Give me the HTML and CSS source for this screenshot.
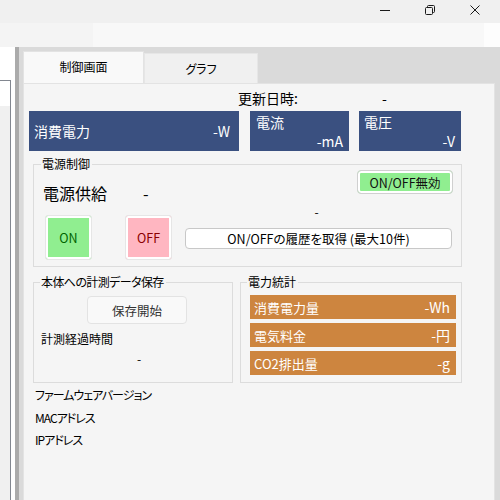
FILE: index.html
```html
<!DOCTYPE html>
<html lang="ja">
<head>
<meta charset="utf-8">
<title>制御画面</title>
<link rel="stylesheet" href="styles.css">
</head>
<body>
<div class="titlebar">
  <div class="cap-btn"><svg width="10" height="10" viewBox="0 0 10 10"><path d="M0 5.5H10" stroke="#1a1a1a" stroke-width="1" fill="none"/></svg></div>
  <div class="cap-btn"><svg width="10" height="10" viewBox="0 0 10 10"><rect x="0.5" y="2.5" width="7" height="7" rx="1" stroke="#1a1a1a" stroke-width="1" fill="none"/><path d="M2.5 2.5V1.5A1 1 0 0 1 3.5 0.5H8.5A1 1 0 0 1 9.5 1.5V6.5A1 1 0 0 1 8.5 7.5H7.5" stroke="#1a1a1a" stroke-width="1" fill="none"/></svg></div>
  <div class="cap-btn"><svg width="10" height="10" viewBox="0 0 10 10"><path d="M0.5 0.5L9.5 9.5M9.5 0.5L0.5 9.5" stroke="#1a1a1a" stroke-width="1" fill="none"/></svg></div>
</div>
<div class="toolbar"><div class="tb-a"></div><div class="tb-b"></div><div class="tb-c"></div></div>
<div class="main">
  <div class="leftpane"><div class="tree"><div class="tree-top"></div></div></div>
  <div class="splitter"></div>
  <div class="tabarea">
    <div class="tabs">
      <div class="tab active">制御画面</div>
      <div class="tab">グラフ</div>
    </div>
    <div class="panel">
      <div class="updated"><span class="upd-label">更新日時:</span><span>-</span></div>
      <div class="meters">
        <div class="meter m-power"><span>消費電力</span><span>-W</span></div>
        <div class="meter m-stack m-current"><span>電流</span><span class="mv">-mA</span></div>
        <div class="meter m-stack m-voltage"><span>電圧</span><span class="mv">-V</span></div>
      </div>
      <fieldset class="group g-power">
        <legend>電源制御</legend>
        <div class="pw-row1">
          <span class="supply-label">電源供給</span>
          <span class="supply-val">-</span>
          <button class="btn-disable"><span>ON/OFF無効</span></button>
        </div>
        <div class="pw-row2">
          <button class="btn-big btn-on">ON</button>
          <button class="btn-big btn-off">OFF</button>
          <div class="hist-col">
            <div class="hist-val">-</div>
            <button class="btn-hist">ON/OFFの履歴を取得 (最大10件)</button>
          </div>
        </div>
      </fieldset>
      <div class="lower">
        <fieldset class="group g-save">
          <legend>本体への計測データ保存</legend>
          <button class="btn-save">保存開始</button>
          <div class="elapsed-label">計測経過時間</div>
          <div class="elapsed-val">-</div>
        </fieldset>
        <fieldset class="group g-stats">
          <legend>電力統計</legend>
          <div class="stat"><span>消費電力量</span><span>-Wh</span></div>
          <div class="stat"><span>電気料金</span><span>-円</span></div>
          <div class="stat"><span>CO2排出量</span><span>-g</span></div>
        </fieldset>
      </div>
      <div class="info">
        <div class="info-line">ファームウェアバージョン</div>
        <div class="info-line">MACアドレス</div>
        <div class="info-line">IPアドレス</div>
      </div>
    </div>
  </div>
</div>
</body>
</html>
```

FILE: styles.css
```css
* { box-sizing: border-box; }
html, body { margin: 0; padding: 0; }
body {
  width: 500px;
  height: 500px;
  overflow: hidden;
  background: #f0f0f0;
  font-family: "Noto Sans CJK JP", "Noto Sans", sans-serif;
  font-feature-settings: "palt";
  font-size: 12px;
  color: #000;
}
button { font-family: inherit; font-feature-settings: "palt"; margin: 0; padding: 0; cursor: default; }

.titlebar {
  height: 23px;
  display: flex;
  justify-content: flex-end;
  align-items: flex-start;
  padding-right: 3px;
  background: #f0f0f0;
}
.cap-btn {
  width: 45px;
  height: 20px;
  display: flex;
  align-items: center;
  justify-content: center;
}
.cap-btn svg { display: block; }

.toolbar { height: 24px; display: flex; }
.tb-a { width: 93px; background: #f4f4f4; }
.tb-b { width: 391px; background: #f8f8f8; }
.tb-c { flex: 1; background: #fdfdfd; }

.main { height: 453px; display: flex; }
.leftpane { width: 15px; background: #fff; }
.tree {
  margin-top: 33px;
  width: 11px;
  height: 420px;
  border-top: 1px solid #828790;
  border-right: 1px solid #828790;
  background: #f0f0f0;
}
.tree-top { height: 25px; background: #fff; }
.splitter { width: 4px; background: #ababab; }

.tabarea {
  flex: 1;
  background: #dadada;
  display: flex;
  flex-direction: column;
}
.tabs {
  height: 36px;
  display: flex;
  align-items: flex-end;
  padding-left: 4px;
}
.tab {
  height: 30px;
  width: 114px;
  background: #f0f0f0;
  border: 1px solid #e6e6e6;
  border-bottom: none;
  display: flex;
  align-items: center;
  justify-content: center;
  font-size: 12px;
}
.tab.active {
  height: 32px;
  width: 121px;
  background: #f9f9f9;
  border-color: #e3e3e3;
  padding-bottom: 2px;
}

.panel {
  flex: 1;
  margin: 0 5px 0 4px;
  background: #f5f5f5;
  border: 1px solid #e3e3e3;
  border-bottom: none;
}

.updated {
  height: 27px;
  display: flex;
  align-items: center;
  padding-left: 214px;
  font-size: 14px;
}
.upd-label { width: 144px; }

.meters {
  height: 40px;
  display: flex;
  margin-left: 5px;
  gap: 11px;
}
.meter {
  background: #3a5080;
  color: #fff;
  font-size: 14px;
  display: flex;
}
.m-power {
  width: 210px;
  align-items: center;
  justify-content: space-between;
  padding: 0 9px 0 5px;
}
.m-stack {
  flex-direction: column;
  justify-content: space-between;
  padding: 2px 6px 1px 6px;
  line-height: 18px;
}
.m-stack .mv { align-self: flex-end; }
.m-current { width: 99px; }
.m-voltage { width: 102px; margin-left: -1px; padding-left: 5px; }

.group {
  margin: 0;
  padding: 0;
  border: 1px solid #dcdcdc;
  min-width: 0;
}
.group legend {
  font-size: 12px;
  line-height: 14px;
  padding: 0 2px 0 1px;
  margin-left: 6px;
}

.g-power {
  margin: 6px 0 0 9px;
  width: 429px;
  padding-bottom: 6px;
}
.g-power legend { margin-left: 7px; }
.pw-row1 {
  height: 33px;
  display: flex;
  align-items: flex-start;
}
.supply-label {
  margin: 12px 0 0 9px;
  font-size: 16px;
  line-height: 20px;
}
.supply-val {
  margin: 12px 0 0 36px;
  font-size: 16px;
  line-height: 20px;
}
.btn-disable {
  margin: -1px 8px 0 auto;
  width: 96px;
  height: 24px;
  border: 1px solid #d0d0d0;
  border-radius: 4px;
  background: #90ee90;
  box-shadow: inset 0 0 0 2px #fff;
  font-size: 12.5px;
  color: #111;
}
.pw-row2 {
  display: flex;
  align-items: flex-start;
}
.btn-big {
  width: 47px;
  height: 45px;
  margin-top: 11px;
  border: 1px solid #e6e6e6;
  border-radius: 3px;
  box-shadow: inset 0 0 0 2px #fff;
  font-size: 12.5px;
}
.btn-on { margin-left: 11px; background: #90ee90; color: #006400; }
.btn-off { margin-left: 33px; background: #ffb6c1; color: #8b0000; }
.hist-col {
  margin-left: 13px;
  width: 267px;
  display: flex;
  flex-direction: column;
}
.hist-val {
  text-align: center;
  line-height: 16px;
  font-size: 12px;
  padding-right: 4px;
}
.btn-hist {
  margin-top: 8px;
  height: 21px;
  background: #fff;
  border: 1px solid #c8c8c8;
  border-radius: 4px;
  font-size: 12.5px;
  color: #000;
}

.lower {
  display: flex;
  align-items: stretch;
  margin: 8px 0 0 9px;
  gap: 7px;
}
.g-save { width: 200px; padding-bottom: 15px; }
.g-save legend { letter-spacing: -0.6px; }
.g-stats { width: 222px; padding-bottom: 7px; }
.btn-save {
  display: block;
  margin: 7px 0 0 53px;
  width: 100px;
  height: 28px;
  background: #f9f9f9;
  border: 1px solid #e3e3e3;
  border-radius: 4px;
  font-size: 12.5px;
  color: #333;
}
.elapsed-label {
  margin: 7px 0 0 7px;
  line-height: 16px;
  font-size: 12px;
}
.elapsed-val {
  margin-top: 4px;
  padding-left: 103px;
  line-height: 16px;
}
.stat {
  margin: 4px 5px 0 9px;
  height: 24px;
  background: #cd853f;
  color: #fff;
  font-size: 13px;
  display: flex;
  align-items: center;
  justify-content: space-between;
  padding: 0 6px 0 4px;
}
.stat span:last-child { font-size: 14px; }
.stat:first-of-type { margin-top: 6px; }

.info {
  margin-top: 1px;
  padding-left: 11px;
}
.info-line {
  line-height: 22.5px;
  font-size: 12px;
  letter-spacing: -1px;
}
```
